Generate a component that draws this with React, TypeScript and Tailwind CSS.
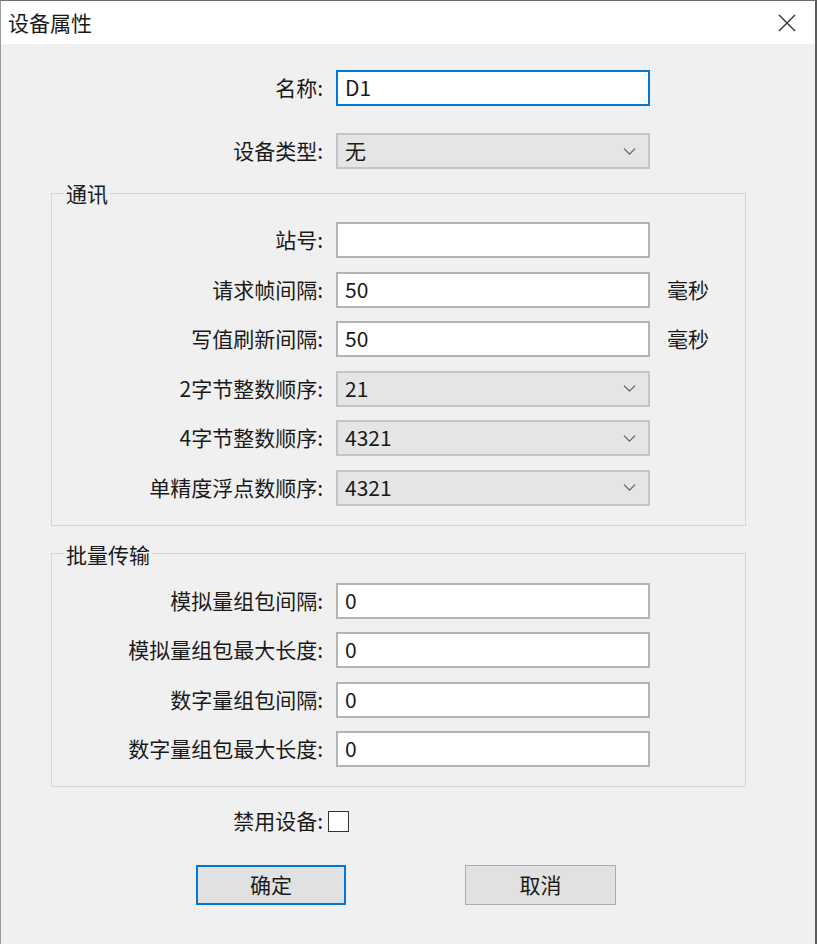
import { ChevronDown } from "lucide-react";

const FONT = "font-['Microsoft_YaHei','Noto_Sans_CJK_SC',sans-serif]";

type Field = {
  label: string;
  value: string;
  kind: "text" | "select";
  unit?: string;
  focused?: boolean;
};

const COMM_FIELDS: Field[] = [
  { label: "站号:", value: "", kind: "text" },
  { label: "请求帧间隔:", value: "50", kind: "text", unit: "毫秒" },
  { label: "写值刷新间隔:", value: "50", kind: "text", unit: "毫秒" },
  { label: "2字节整数顺序:", value: "21", kind: "select" },
  { label: "4字节整数顺序:", value: "4321", kind: "select" },
  { label: "单精度浮点数顺序:", value: "4321", kind: "select" },
];

const BATCH_FIELDS: Field[] = [
  { label: "模拟量组包间隔:", value: "0", kind: "text" },
  { label: "模拟量组包最大长度:", value: "0", kind: "text" },
  { label: "数字量组包间隔:", value: "0", kind: "text" },
  { label: "数字量组包最大长度:", value: "0", kind: "text" },
];

function FieldRow({ field }: { field: Field }) {
  return (
    <div className="flex h-[36px] items-center">
      <span className="w-[271px] shrink-0 text-right">{field.label}</span>
      {field.kind === "text" ? (
        <div
          className={`ml-[13px] flex h-full w-[314px] items-center border-2 bg-white px-[7px] ${
            field.focused ? "border-[#0078d7]" : "border-[#b4b4b4]"
          }`}
        >
          {field.value}
        </div>
      ) : (
        <div className="ml-[13px] flex h-full w-[314px] items-center justify-between border-2 border-[#c4c4c4] bg-[#e5e5e5] pl-[7px] pr-[8px]">
          <span>{field.value}</span>
          <ChevronDown size={21} strokeWidth={1.3} className="text-[#5a5a5a]" />
        </div>
      )}
      {field.unit && <span className="ml-[17px]">{field.unit}</span>}
    </div>
  );
}

function Group({ title, fields }: { title: string; fields: Field[] }) {
  return (
    <fieldset className="ml-[50px] w-[695px] border border-[#d6d6d6] pb-[19px] pt-[15px]">
      <legend className="ml-[12px] px-[2px] leading-[28px]">{title}</legend>
      <div className="flex flex-col gap-[13.5px]">
        {fields.map((f) => (
          <FieldRow key={f.label} field={f} />
        ))}
      </div>
    </fieldset>
  );
}

export default function App() {
  return (
    <div
      className={`${FONT} h-[944px] w-[817px] overflow-hidden border-l border-r-2 border-t border-l-[#9a9a9a] border-r-[#5c5c5c] border-t-[#6e6e6e] bg-[#f0f0f0] text-[21px] text-[#1a1a1a]`}
    >
      {/* Title bar */}
      <div className="flex h-[43px] items-center justify-between bg-white pl-[7px] pr-[19px]">
        <span className="leading-none">设备属性</span>
        <svg width="18" height="18" viewBox="0 0 18 18" className="text-[#333]">
          <path d="M1 1L17 17M17 1L1 17" stroke="currentColor" strokeWidth="1.4" />
        </svg>
      </div>

      <div className="pt-[26px]">
        <div className="ml-[51px]">
          <FieldRow field={{ label: "名称:", value: "D1", kind: "text", focused: true }} />
        </div>
        <div className="ml-[51px] mt-[27px]">
          <FieldRow field={{ label: "设备类型:", value: "无", kind: "select" }} />
        </div>

        <div className="mt-[10px]">
          <Group title="通讯" fields={COMM_FIELDS} />
        </div>
        <div className="mt-[14px]">
          <Group title="批量传输" fields={BATCH_FIELDS} />
        </div>

        {/* Disable device */}
        <div className="mt-[23px] flex h-[22px] items-center">
          <span className="w-[322px] text-right">禁用设备:</span>
          <span className="ml-[5px] h-[21px] w-[21px] border border-[#333] bg-white" />
        </div>

        {/* Buttons */}
        <div className="mt-[33px] flex">
          <button
            type="button"
            className="ml-[195px] h-[40px] w-[150px] border-2 border-[#0078d7] bg-[#e1e1e1]"
          >
            确定
          </button>
          <button
            type="button"
            className="ml-[119px] h-[40px] w-[151px] border border-[#adadad] bg-[#e1e1e1]"
          >
            取消
          </button>
        </div>
      </div>
    </div>
  );
}
